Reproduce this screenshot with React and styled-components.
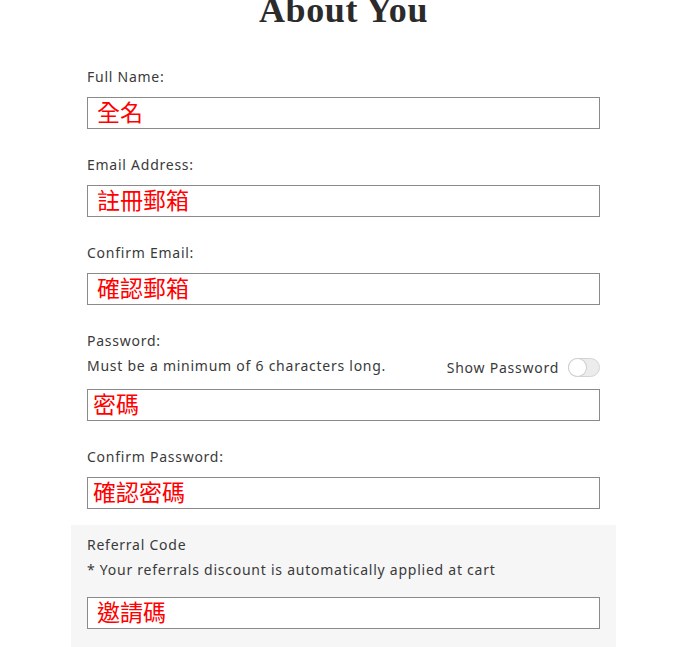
import { useState } from "react";
import styled, { createGlobalStyle } from "styled-components";

const GlobalStyle = createGlobalStyle`
  html, body {
    margin: 0;
    padding: 0;
    background: #fff;
  }
  body {
    font-family: "Noto Sans", "Open Sans", sans-serif;
    color: #3a3a3a;
  }
`;

const Page = styled.div`
  display: flex;
  justify-content: center;
  padding-left: 3px;
  overflow: hidden;
  height: 647px;
`;

const Wrapper = styled.div`
  width: 545px;
  display: flex;
  flex-direction: column;
`;

const Title = styled.h1`
  margin: -10px 0 0;
  text-align: center;
  font-family: "Liberation Serif", "DejaVu Serif", serif;
  font-weight: 700;
  font-size: 36px;
  line-height: 40px;
  color: #2b2b2b;
  letter-spacing: 0.6px;
`;

const Form = styled.div`
  display: flex;
  flex-direction: column;
  padding: 0 16px;
  margin-top: 37px;
`;

const Field = styled.div`
  display: flex;
  flex-direction: column;
  margin-bottom: 26px;
`;

const Label = styled.label`
  font-size: 14px;
  line-height: 20px;
  letter-spacing: 0.75px;
  color: #3a3a3a;
`;

const Hint = styled.span`
  font-size: 14px;
  line-height: 20px;
  letter-spacing: 0.75px;
  color: #3a3a3a;
`;

const HintRow = styled.div`
  display: flex;
  justify-content: space-between;
  align-items: center;
  margin-top: 4px;
  height: 22px;
`;

const Input = styled.div`
  box-sizing: border-box;
  height: 32px;
  margin-top: ${(p) => p.$gap || 10}px;
  border: 1px solid #8a8a8a;
  background: #fff;
  padding-left: ${(p) => p.$pad || 9}px;
  padding-bottom: 4px;
  display: flex;
  align-items: center;
  font-family: "Noto Sans CJK TC", "Noto Sans CJK SC", sans-serif;
  font-size: 23px;
  color: #ff0000;
`;

const ToggleWrap = styled.label`
  display: flex;
  align-items: center;
  gap: 9px;
  font-size: 14px;
  letter-spacing: 0.75px;
  cursor: pointer;
  margin-top: 3px;
`;

const Track = styled.span`
  position: relative;
  box-sizing: border-box;
  width: 32px;
  height: 19px;
  border-radius: 10px;
  border: 1px solid #d4d4d4;
  background: ${(p) => (p.$on ? "#2b2b2b" : "#ececec")};
`;

const Knob = styled.span`
  position: absolute;
  top: 0;
  left: ${(p) => (p.$on ? "13px" : "0")};
  width: 17px;
  height: 17px;
  border-radius: 50%;
  background: #fff;
  box-shadow: 0 0 0 1px #d0d0d0;
`;

const Referral = styled.div`
  background: #f6f6f6;
  padding: 10px 16px 18px;
  margin-top: -10px;
  display: flex;
  flex-direction: column;
`;

const ReferralHint = styled(Hint)`
  margin-top: 5px;
`;

const App = () => {
  const [show, setShow] = useState(false);

  return (
    <Page>
      <GlobalStyle />
      <Wrapper>
        <Title>About You</Title>
        <Form>
          <Field>
            <Label>Full Name:</Label>
            <Input>全名</Input>
          </Field>
          <Field>
            <Label>Email Address:</Label>
            <Input>註冊郵箱</Input>
          </Field>
          <Field>
            <Label>Confirm Email:</Label>
            <Input>確認郵箱</Input>
          </Field>
          <Field>
            <Label>Password:</Label>
            <HintRow>
              <Hint>Must be a minimum of 6 characters long.</Hint>
              <ToggleWrap onClick={() => setShow(!show)}>
                Show Password
                <Track $on={show}>
                  <Knob $on={show} />
                </Track>
              </ToggleWrap>
            </HintRow>
            <Input $gap={12} $pad={5}>密碼</Input>
          </Field>
          <Field>
            <Label>Confirm Password:</Label>
            <Input $pad={5}>確認密碼</Input>
          </Field>
        </Form>
        <Referral>
          <Label>Referral Code</Label>
          <ReferralHint>* Your referrals discount is automatically applied at cart</ReferralHint>
          <Input $gap={17}>邀請碼</Input>
        </Referral>
      </Wrapper>
    </Page>
  );
};

export default App;
